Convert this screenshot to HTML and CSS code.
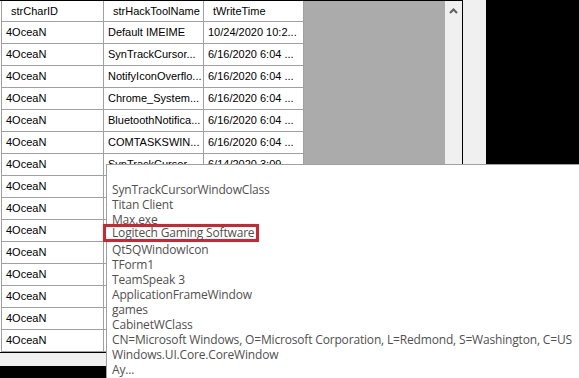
FILE: index.html
```html
<!DOCTYPE html>
<html lang="en">
<head>
    <meta charset="UTF-8">
    <title>strHackToolName</title>
    <link rel="stylesheet" href="styles.css">
</head>
<body>
    <div class="screen">
        <div class="app">
            <div class="view">
                <div class="grid">
                    <div class="row head">
                        <div class="cell">strCharID</div>
                        <div class="cell">strHackToolName</div>
                        <div class="cell">tWriteTime</div>
                    </div>
                    <div class="row"><div class="cell">4OceaN</div><div class="cell">Default IMEIME</div><div class="cell">10/24/2020 10:2...</div></div>
                    <div class="row"><div class="cell">4OceaN</div><div class="cell">SynTrackCursor...</div><div class="cell">6/16/2020 6:04 ...</div></div>
                    <div class="row"><div class="cell">4OceaN</div><div class="cell">NotifyIconOverflo...</div><div class="cell">6/16/2020 6:04 ...</div></div>
                    <div class="row"><div class="cell">4OceaN</div><div class="cell">Chrome_System...</div><div class="cell">6/16/2020 6:04 ...</div></div>
                    <div class="row"><div class="cell">4OceaN</div><div class="cell">BluetoothNotifica...</div><div class="cell">6/16/2020 6:04 ...</div></div>
                    <div class="row"><div class="cell">4OceaN</div><div class="cell">COMTASKSWIN...</div><div class="cell">6/16/2020 6:04 ...</div></div>
                    <div class="row"><div class="cell">4OceaN</div><div class="cell">SynTrackCursor...</div><div class="cell">6/14/2020 3:09 ...</div></div>
                    <div class="row"><div class="cell">4OceaN</div><div class="cell"></div><div class="cell"></div></div>
                    <div class="row"><div class="cell">4OceaN</div><div class="cell"></div><div class="cell"></div></div>
                    <div class="row"><div class="cell">4OceaN</div><div class="cell"></div><div class="cell"></div></div>
                    <div class="row"><div class="cell">4OceaN</div><div class="cell"></div><div class="cell"></div></div>
                    <div class="row"><div class="cell">4OceaN</div><div class="cell"></div><div class="cell"></div></div>
                    <div class="row"><div class="cell">4OceaN</div><div class="cell"></div><div class="cell"></div></div>
                    <div class="row"><div class="cell">4OceaN</div><div class="cell"></div><div class="cell"></div></div>
                    <div class="row"><div class="cell">4OceaN</div><div class="cell"></div><div class="cell"></div></div>
                </div>
                <div class="workspace"></div>
                <div class="vscroll">
                    <svg class="arrow" width="9" height="6" viewBox="0 0 9 6">
                        <path d="M1 5 L4.5 1.5 L8 5" fill="none" stroke="#606060" stroke-width="2"/>
                    </svg>
                </div>
            </div>
            <div class="hscroll"></div>
        </div>
        <div class="side"></div>

        <!-- ツールチップ -->
        <div class="popup">
            <div class="line">&nbsp;</div>
            <div class="line">SynTrackCursorWindowClass</div>
            <div class="line">Titan Client</div>
            <div class="line">Max.exe</div>
            <div class="line hit">Logitech Gaming Software</div>
            <div class="line">Qt5QWindowIcon</div>
            <div class="line">TForm1</div>
            <div class="line">TeamSpeak 3</div>
            <div class="line">ApplicationFrameWindow</div>
            <div class="line">games</div>
            <div class="line">CabinetWClass</div>
            <div class="line">CN=Microsoft Windows, O=Microsoft Corporation, L=Redmond, S=Washington, C=US</div>
            <div class="line">Windows.UI.Core.CoreWindow</div>
            <div class="line">Ay...</div>
        </div>
    </div>
</body>
</html>
```

FILE: styles.css
```css
/* 全体 */
body {
    margin: 0;
    background-color: #000;
}
.screen {
    position: relative;
    width: 579px;
    height: 378px;
    overflow: hidden;
    display: flex;
    align-items: flex-start;
    background-color: #000;
}
.app {
    width: 462px;
    display: flex;
    flex-direction: column;
    border-right: 1px solid #000;
}
.view {
    height: 353px;
    box-sizing: border-box;
    display: flex;
    background-color: #fff;
    border-top: 1px solid #000;
    border-bottom: 1px solid #000;
    overflow: hidden;
}
/* グリッド */
.grid {
    width: 303px;
    margin-left: 1px;
    border-left: 1px solid #a0a0a0;
    box-sizing: border-box;
    flex-shrink: 0;
    font-family: "Liberation Sans", Arial, sans-serif;
    font-size: 11px;
    color: #000;
}
.row {
    display: grid;
    grid-template-columns: 102px 100px 100px;
    height: 22px;
    box-sizing: border-box;
    border-bottom: 1px solid #a0a0a0;
}
.row.head {
    height: 21px;
}
.cell {
    border-right: 1px solid #a0a0a0;
    padding: 0 4px;
    line-height: 21px;
    white-space: nowrap;
    overflow: hidden;
}
.head .cell {
    padding-left: 9px;
    line-height: 20px;
}
.workspace {
    flex: 1;
    background-color: #ababab;
}
.vscroll {
    width: 17px;
    background-color: #f0f0f0;
    display: flex;
    justify-content: center;
    padding-top: 7px;
    box-sizing: border-box;
}
.arrow {
    display: block;
}
.hscroll {
    height: 13px;
    background-color: #f0f0f0;
}
.side {
    width: 23px;
    height: 366px;
    background-color: #f0f0f0;
}
/* ツールチップ */
.popup {
    position: absolute;
    left: 106px;
    top: 164px;
    right: 0;
    bottom: 0;
    background-color: #fff;
    border-top: 1px solid #a0a0a0;
    border-left: 1px solid #a0a0a0;
    padding: 2px 0 0 5px;
    font-family: "Open Sans", "Noto Sans", sans-serif;
    font-size: 12px;
    letter-spacing: -0.17px;
    line-height: 15px;
    color: #505050;
    white-space: nowrap;
}
.hit {
    position: relative;
    width: 156px;
    height: 18px;
    box-sizing: border-box;
    margin: -3px 0 0 -9px;
    padding-left: 6px;
    line-height: 12px;
    border: 3px solid #d2232e;
    background-color: #fff;
}
```
